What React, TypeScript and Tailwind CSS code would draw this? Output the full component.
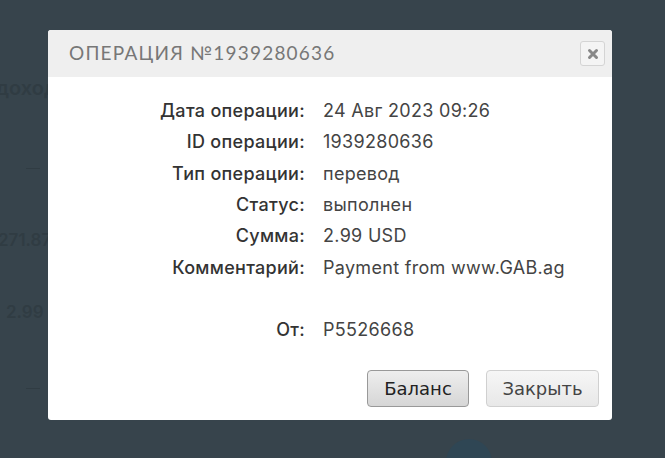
import React from "react";

type Row = { label: string; value: string };

const rows: Row[] = [
  { label: "Дата операции:", value: "24 Авг 2023 09:26" },
  { label: "ID операции:", value: "1939280636" },
  { label: "Тип операции:", value: "перевод" },
  { label: "Статус:", value: "выполнен" },
  { label: "Сумма:", value: "2.99 USD" },
  { label: "Комментарий:", value: "Payment from www.GAB.ag" },
  { label: "", value: "" },
  { label: "От:", value: "P5526668" },
];

const App = () => {
  return (
    <div className="relative w-[665px] h-[458px] overflow-hidden bg-[#37444c] font-['Inter',sans-serif]">
      {/* page behind the overlay */}
      <div className="flex flex-col text-[#303c43] font-semibold text-[17px] pt-[73px]">
        <div className="h-[30px] flex items-center -ml-[4px] text-[20px]">доход</div>
        <div className="h-[30px] flex items-center mt-[50px] pl-[26px]">
          <div className="h-[1px] w-[14px] bg-[#303c43]" />
        </div>
        <div className="h-[30px] flex items-center mt-[43px] -ml-[2px]">271.87</div>
        <div className="h-[30px] flex items-center mt-[42px] pl-[6px]">2.99</div>
        <div className="h-[30px] flex items-center mt-[45px] pl-[26px]">
          <div className="h-[1px] w-[14px] bg-[#303c43]" />
        </div>
      </div>
      <div className="absolute left-[446px] top-[439px] w-[46px] h-[46px] rounded-full bg-[#2f4654]" />

      {/* modal */}
      <div className="absolute left-[48px] top-[30px] w-[564px] h-[390px] bg-white rounded-[3px] flex flex-col overflow-hidden">
        <div className="h-[47px] bg-[#efefef] flex items-center justify-between pl-[21px] pr-[7px]">
          <span className="text-[19px] tracking-[1.2px] text-[#777] font-['Lato',sans-serif]">
            ОПЕРАЦИЯ №1939280636
          </span>
          <button className="w-[25px] h-[25px] rounded-[3px] border border-[#d4d4d4] bg-[#f4f4f4] flex items-center justify-center">
            <svg width="12" height="12" viewBox="0 0 12 12">
              <path d="M2.5 2.5 L9.5 9.5 M9.5 2.5 L2.5 9.5" stroke="#888" strokeWidth="3" strokeLinecap="round" />
            </svg>
          </button>
        </div>

        <div className="flex flex-col pt-[18px]">
          {rows.map((r, i) => (
            <div key={i} className="flex h-[31.3px] items-center text-[18px] tracking-[0.3px]">
              <div className="w-[257px] text-right font-medium text-[#333]">{r.label}</div>
              <div className="pl-[18px] text-[#444]">{r.value}</div>
            </div>
          ))}
        </div>

        <div className="mt-auto flex justify-end gap-[17px] pr-[13px] pb-[13px] font-['DejaVu_Sans',sans-serif] text-[18px]">
          <button className="w-[102px] h-[37px] rounded-[4px] border border-[#999] bg-gradient-to-b from-[#eeeeee] to-[#d6d6d6] text-[#222]">
            Баланс
          </button>
          <button className="w-[113px] h-[37px] rounded-[4px] border border-[#d0d0d0] bg-gradient-to-b from-[#f6f6f6] to-[#e8e8e8] text-[#444]">
            Закрыть
          </button>
        </div>
      </div>
    </div>
  );
};

export default App;
